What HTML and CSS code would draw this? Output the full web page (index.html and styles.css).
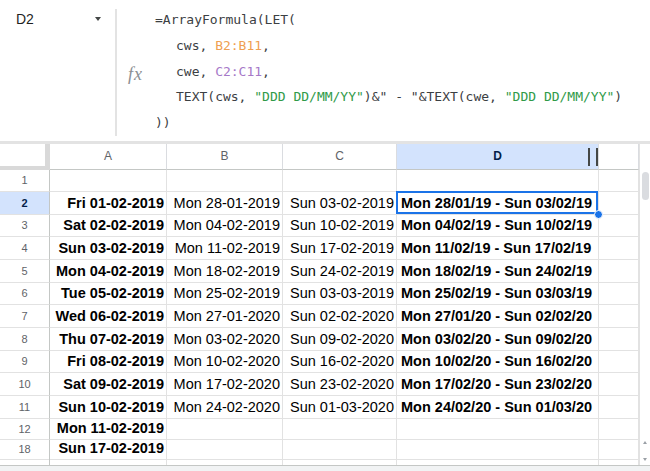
FILE: index.html
```html
<!DOCTYPE html>
<html>
<head>
<meta charset="utf-8">
<link rel="stylesheet" href="styles.css">
</head>
<body>
<div class="fbar">
  <div class="namebox"><span class="ref">D2</span><span class="caret"></span></div>
  <div class="vsep"></div>
  <div class="fx">fx</div>
  <div class="formula">
    <div class="fl">=ArrayFormula(LET(</div>
    <div class="fl ind">cws, <span class="r1">B2:B11</span>,</div>
    <div class="fl ind">cwe, <span class="r2">C2:C11</span>,</div>
    <div class="fl ind">TEXT(cws, <span class="str">"DDD DD/MM/YY"</span>)&amp;" - "&amp;TEXT(cwe, <span class="str">"DDD DD/MM/YY"</span>)</div>
    <div class="fl">))</div>
  </div>
</div>
<div class="sheet">
  <div class="grid">
    <div class="row h26">
      <div class="c corner"></div>
      <div class="c ch">A</div>
      <div class="c ch">B</div>
      <div class="c ch">C</div>
      <div class="c ch selh">D<span class="grip"></span></div>
      <div class="c ch"></div>
    </div>
    <div class="row h22"><div class="c rh">1</div><div class="c"></div><div class="c"></div><div class="c"></div><div class="c"></div><div class="c"></div></div>
    <div class="row h23"><div class="c rh selh">2</div><div class="c b rt">Fri 01-02-2019</div><div class="c rt">Mon 28-01-2019</div><div class="c rt">Sun 03-02-2019</div><div class="c b sel">Mon 28/01/19 - Sun 03/02/19<span class="handle"></span></div><div class="c"></div></div>
    <div class="row h22"><div class="c rh">3</div><div class="c b rt">Sat 02-02-2019</div><div class="c rt">Mon 04-02-2019</div><div class="c rt">Sun 10-02-2019</div><div class="c b">Mon 04/02/19 - Sun 10/02/19</div><div class="c"></div></div>
    <div class="row h23"><div class="c rh">4</div><div class="c b rt">Sun 03-02-2019</div><div class="c rt">Mon 11-02-2019</div><div class="c rt">Sun 17-02-2019</div><div class="c b">Mon 11/02/19 - Sun 17/02/19</div><div class="c"></div></div>
    <div class="row h23"><div class="c rh">5</div><div class="c b rt">Mon 04-02-2019</div><div class="c rt">Mon 18-02-2019</div><div class="c rt">Sun 24-02-2019</div><div class="c b">Mon 18/02/19 - Sun 24/02/19</div><div class="c"></div></div>
    <div class="row h22"><div class="c rh">6</div><div class="c b rt">Tue 05-02-2019</div><div class="c rt">Mon 25-02-2019</div><div class="c rt">Sun 03-03-2019</div><div class="c b">Mon 25/02/19 - Sun 03/03/19</div><div class="c"></div></div>
    <div class="row h23"><div class="c rh">7</div><div class="c b rt">Wed 06-02-2019</div><div class="c rt">Mon 27-01-2020</div><div class="c rt">Sun 02-02-2020</div><div class="c b">Mon 27/01/20 - Sun 02/02/20</div><div class="c"></div></div>
    <div class="row h23"><div class="c rh">8</div><div class="c b rt">Thu 07-02-2019</div><div class="c rt">Mon 03-02-2020</div><div class="c rt">Sun 09-02-2020</div><div class="c b">Mon 03/02/20 - Sun 09/02/20</div><div class="c"></div></div>
    <div class="row h22"><div class="c rh">9</div><div class="c b rt">Fri 08-02-2019</div><div class="c rt">Mon 10-02-2020</div><div class="c rt">Sun 16-02-2020</div><div class="c b">Mon 10/02/20 - Sun 16/02/20</div><div class="c"></div></div>
    <div class="row h23"><div class="c rh">10</div><div class="c b rt">Sat 09-02-2019</div><div class="c rt">Mon 17-02-2020</div><div class="c rt">Sun 23-02-2020</div><div class="c b">Mon 17/02/20 - Sun 23/02/20</div><div class="c"></div></div>
    <div class="row h23"><div class="c rh">11</div><div class="c b rt">Sun 10-02-2019</div><div class="c rt">Mon 24-02-2020</div><div class="c rt">Sun 01-03-2020</div><div class="c b">Mon 24/02/20 - Sun 01/03/20</div><div class="c"></div></div>
    <div class="row h21"><div class="c rh">12</div><div class="c b rt">Mon 11-02-2019</div><div class="c"></div><div class="c"></div><div class="c"></div><div class="c"></div></div>
    <div class="row h19"><div class="c rh">18</div><div class="c b rt">Sun 17-02-2019</div><div class="c"></div><div class="c"></div><div class="c"></div><div class="c"></div></div>
    <div class="row h6"><div class="c rh nb"></div><div class="c nb"></div><div class="c nb"></div><div class="c nb"></div><div class="c nb"></div><div class="c nb"></div></div>
  </div>
  <div class="vscroll">
    <div class="thumb"></div>
    <div class="spacer"></div>
    <div class="arr up"></div>
    <div class="arr down"></div>
  </div>
</div>
<div class="hscroll"></div>
</body>
</html>
```
FILE: styles.css
```css
body {
  margin: 0;
  width: 650px;
  height: 471px;
  overflow: hidden;
  background: #fff;
  font-family: "Liberation Sans", Arial, sans-serif;
}

.fbar {
  display: flex;
  height: 141px;
  border-bottom: 3px solid #e3e3e3;
}

.namebox {
  width: 115px;
  box-sizing: border-box;
  display: flex;
  padding: 11px 14px 0 16px;
}

.ref {
  font-size: 14px;
  line-height: 16px;
  color: #1f1f1f;
}

.caret {
  margin-left: auto;
  margin-top: 6px;
  width: 0;
  height: 0;
  border-left: 3.5px solid transparent;
  border-right: 3.5px solid transparent;
  border-top: 4px solid #444746;
}

.vsep {
  width: 2px;
  background: #e3e3e3;
  margin: 9px 0 5px;
}

.fx {
  width: 38px;
  box-sizing: border-box;
  padding: 64px 0 0 11px;
  font-family: "Liberation Serif", serif;
  font-style: italic;
  font-size: 18px;
  line-height: 20px;
  letter-spacing: 1px;
  color: #8c8f93;
}

.formula {
  padding-top: 7px;
  font-family: "DejaVu Sans Mono", monospace;
  font-size: 13px;
  line-height: 25.75px;
  color: #3c4043;
}

.fl { white-space: pre; }
.ind { padding-left: 21px; }
.r1 { color: #ef9f52; }
.r2 { color: #a679c8; }
.str { color: #2f9a48; }

.sheet {
  display: flex;
  height: 321px;
}

.grid { width: 639px; }

.row {
  display: grid;
  grid-template-columns: 50px 117px 116px 114px 202px 40px;
}

.h26 { height: 26px; }
.h23 { height: 23px; }
.h22 { height: 22px; }
.h21 { height: 21px; }
.h19 { height: 19px; }
.h6 { height: 6px; }

.c {
  box-sizing: border-box;
  min-width: 0;
  border-right: 1px solid #e2e2e2;
  border-bottom: 1px solid #e2e2e2;
  display: flex;
  align-items: flex-end;
  padding: 0 2px 2px 4px;
  font-size: 14.5px;
  line-height: 17px;
  color: #000;
  white-space: nowrap;
}

.b { font-weight: bold; }
.rt { justify-content: flex-end; }
.nb { border-bottom: none; }

.rh {
  justify-content: center;
  align-items: center;
  padding: 0;
  font-size: 11px;
  color: #5f6368;
  border-right-color: #c4c7c5;
}

.ch {
  justify-content: center;
  align-items: center;
  padding: 0;
  font-size: 12px;
  color: #5f6368;
  border-right-color: #dadce0;
  border-bottom-color: #c4c7c5;
}

.corner {
  border-right: 5px solid #d9d9d9;
  border-bottom: 4px solid #d9d9d9;
  padding: 0;
}

.selh {
  background: #d3e3fd;
  color: #041e49;
  font-weight: bold;
  position: relative;
}

.grip {
  position: absolute;
  right: 0;
  top: 4px;
  width: 6px;
  height: 18px;
  border-left: 2px solid #444746;
  border-right: 2px solid #444746;
}

.sel { position: relative; }

.sel::after {
  content: "";
  position: absolute;
  left: -1px;
  top: -1px;
  right: 0;
  bottom: 0;
  border: 2px solid #1a73e8;
}

.handle {
  position: absolute;
  right: -5px;
  bottom: -5px;
  width: 7px;
  height: 7px;
  border-radius: 50%;
  background: #1a73e8;
  border: 1px solid #fff;
  z-index: 2;
}

.vscroll {
  width: 11px;
  box-sizing: border-box;
  border-left: 1px solid #e2e2e2;
  display: flex;
  flex-direction: column;
  align-items: center;
  padding: 28px 0 4px;
}

.thumb {
  width: 7px;
  height: 28px;
  background: #dadce0;
  border-radius: 4px;
}

.spacer { flex: 1; }

.arr {
  width: 0;
  height: 0;
  border-left: 2.5px solid transparent;
  border-right: 2.5px solid transparent;
}

.up {
  border-bottom: 3px solid #9aa0a6;
  margin-bottom: 14px;
}

.down {
  border-top: 3px solid #9aa0a6;
}

.hscroll {
  height: 5px;
  border-top: 1px solid #c4c7c5;
  background: #f1f3f4;
}
```
